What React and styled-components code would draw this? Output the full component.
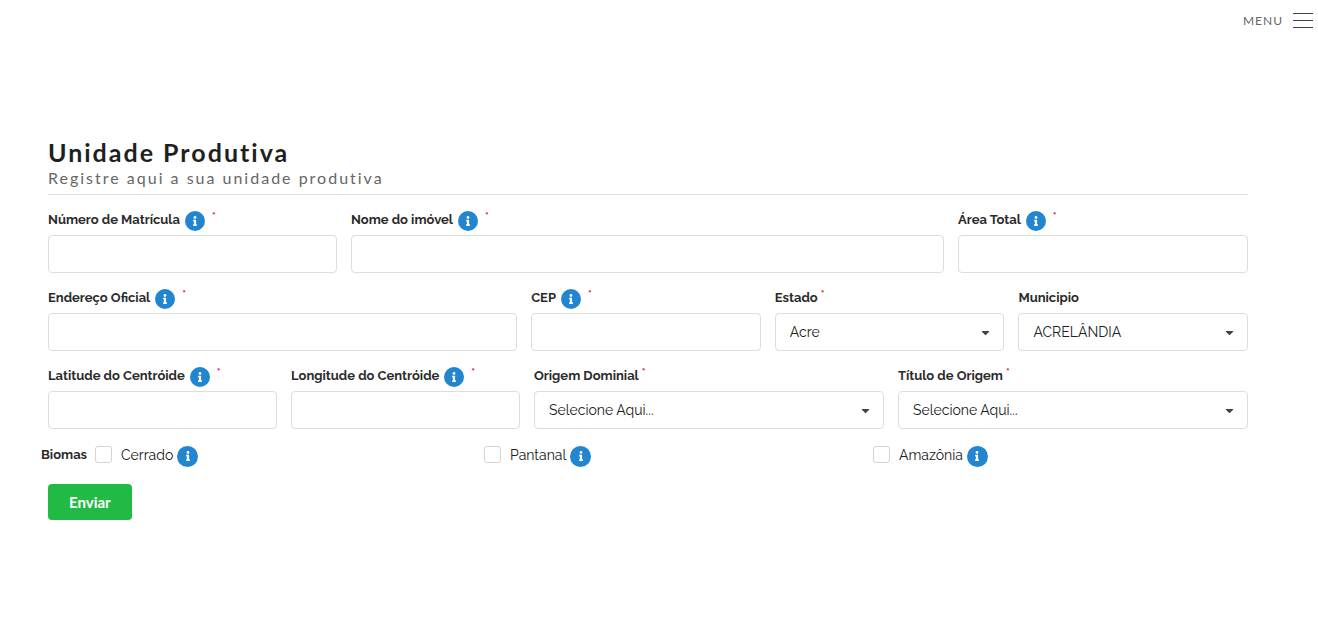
import React, { useId } from "react";
import styled, { createGlobalStyle } from "styled-components";
import { FaInfo, FaCaretDown } from "react-icons/fa";

const GlobalStyle = createGlobalStyle`
  *, *::before, *::after { box-sizing: border-box; }
  body {
    margin: 0;
    background: #fff;
    color: #212121;
    font-family: Raleway, Lato, "Liberation Sans", sans-serif;
    font-size: 14px;
    line-height: 20px;
  }
`;

const TopBar = styled.header`
  display: flex;
  justify-content: flex-end;
  padding: 9px 5px 0;
`;

const MenuButton = styled.button`
  display: flex;
  align-items: center;
  gap: 10px;
  padding: 0;
  border: 0;
  background: none;
  color: #666;
  font: 400 12px/24px Lato, sans-serif;
  letter-spacing: 1px;
  cursor: pointer;
`;

const Bars = styled.span`
  display: grid;
  gap: 6px;
  width: 20px;
  margin-bottom: 2px;

  i {
    height: 1px;
    background: #444;
  }
`;

const Main = styled.main`
  padding: 104px 70px 40px 48px;
`;

const Heading = styled.div`
  padding-bottom: 5px;
  border-bottom: 1px solid #dcdddd;
  margin-bottom: 14px;
  font-family: Lato, sans-serif;
`;

const Title = styled.h1`
  margin: 0;
  color: #1f1f1f;
  font-size: 25px;
  font-weight: 700;
  line-height: 30px;
  letter-spacing: 2px;
`;

const Subtitle = styled.p`
  margin: 0;
  color: #666;
  font-size: 16px;
  line-height: 22px;
  letter-spacing: 2px;
`;

const Form = styled.form`
  display: grid;
  gap: 14px;
`;

const Row = styled.div`
  display: grid;
  grid-template-columns: ${(p) => p.$columns};
  gap: 14px;
`;

const Field = styled.div`
  min-width: 0;
`;

const LabelRow = styled.div`
  display: flex;
  align-items: center;
  height: 22px;
  margin-bottom: 4px;
`;

const Label = styled.label`
  color: #2b2b2b;
  font-size: 13px;
  font-weight: 700;
  line-height: 20px;
  white-space: nowrap;
`;

const InfoBadge = styled.span`
  display: inline-flex;
  flex: none;
  align-items: center;
  justify-content: center;
  width: ${(p) => p.$size}px;
  height: ${(p) => p.$size}px;
  margin: 1px 4px 0 5px;
  border-radius: 50%;
  background: #2185d0;
  color: #fff;
  font-size: 10px;
`;

const Required = styled.span`
  align-self: flex-start;
  margin-left: 3px;
  color: #db2828;
  font-size: 11px;
  font-weight: 700;
  line-height: 16px;
`;

const TextInput = styled.input`
  display: block;
  width: 100%;
  height: 38px;
  padding: 0 14px;
  border: 1px solid #dcdddd;
  border-radius: 4px;
  background: #fff;
  color: #212121;
  font: inherit;
`;

const SelectBox = styled.div`
  position: relative;

  svg {
    position: absolute;
    top: 13px;
    right: 12px;
    color: #444;
    pointer-events: none;
  }
`;

const Select = styled(TextInput).attrs({ as: "select" })`
  appearance: none;
`;

const Biomes = styled.div`
  display: flex;
  align-items: center;
  height: 26px;
  margin: -1px -7px 2px;
`;

const BiomesLabel = styled.span`
  width: 54px;
  color: #2b2b2b;
  font-size: 13px;
  font-weight: 700;
`;

const BiomeList = styled.div`
  display: grid;
  flex: 1;
  grid-template-columns: repeat(3, 1fr);
  gap: 7px;
`;

const Biome = styled.div`
  display: flex;
  align-items: center;

  ${InfoBadge} {
    margin: 2px 0 0 4px;
  }
`;

const Checkbox = styled.input`
  appearance: none;
  width: 17px;
  height: 17px;
  margin: 0 9px 2px 0;
  border: 1px solid #d4d4d5;
  border-radius: 3px;
  background: #fff;

  &:checked {
    background: #2185d0;
  }
`;

const Submit = styled.button`
  justify-self: start;
  height: 36px;
  padding: 0 21px;
  border: 0;
  border-radius: 4px;
  background: #21ba45;
  color: #fff;
  font: 700 15px/20px Lato, sans-serif;
  cursor: pointer;
`;

function Info({ size = 20 }) {
  return (
    <InfoBadge $size={size}>
      <FaInfo aria-hidden="true" />
    </InfoBadge>
  );
}

function FormField({ label, info, required, options }) {
  const id = useId();
  return (
    <Field>
      <LabelRow>
        <Label htmlFor={id}>{label}</Label>
        {info && <Info />}
        {required && <Required>*</Required>}
      </LabelRow>
      {options ? (
        <SelectBox>
          <Select id={id}>
            {options.map((o) => (
              <option key={o}>{o}</option>
            ))}
          </Select>
          <FaCaretDown size={13} aria-hidden="true" />
        </SelectBox>
      ) : (
        <TextInput id={id} type="text" />
      )}
    </Field>
  );
}

function BiomeOption({ label }) {
  const id = useId();
  return (
    <Biome>
      <Checkbox id={id} type="checkbox" />
      <label htmlFor={id}>{label}</label>
      <Info size={21} />
    </Biome>
  );
}

export default function App() {
  return (
    <>
      <GlobalStyle />
      <TopBar>
        <MenuButton type="button">
          MENU
          <Bars>
            <i />
            <i />
            <i />
          </Bars>
        </MenuButton>
      </TopBar>
      <Main>
        <Heading>
          <Title>Unidade Produtiva</Title>
          <Subtitle>Registre aqui a sua unidade produtiva</Subtitle>
        </Heading>
        <Form onSubmit={(e) => e.preventDefault()}>
          <Row $columns="289fr 593fr 290fr">
            <FormField label="Número de Matrícula" info required />
            <FormField label="Nome do imóvel" info required />
            <FormField label="Área Total" info required />
          </Row>
          <Row $columns="468fr 229fr 229fr 229fr">
            <FormField label="Endereço Oficial" info required />
            <FormField label="CEP" info required />
            <FormField label="Estado" required options={["Acre"]} />
            <FormField label="Municipio" options={["ACRELÂNDIA"]} />
          </Row>
          <Row $columns="229fr 229fr 350fr 350fr">
            <FormField label="Latitude do Centróide" info required />
            <FormField label="Longitude do Centróide" info required />
            <FormField label="Origem Dominial" required options={["Selecione Aqui..."]} />
            <FormField label="Título de Origem" required options={["Selecione Aqui..."]} />
          </Row>
          <Biomes role="group" aria-labelledby="biomas">
            <BiomesLabel id="biomas">Biomas</BiomesLabel>
            <BiomeList>
              <BiomeOption label="Cerrado" />
              <BiomeOption label="Pantanal" />
              <BiomeOption label="Amazônia" />
            </BiomeList>
          </Biomes>
          <Submit type="submit">Enviar</Submit>
        </Form>
      </Main>
    </>
  );
}
